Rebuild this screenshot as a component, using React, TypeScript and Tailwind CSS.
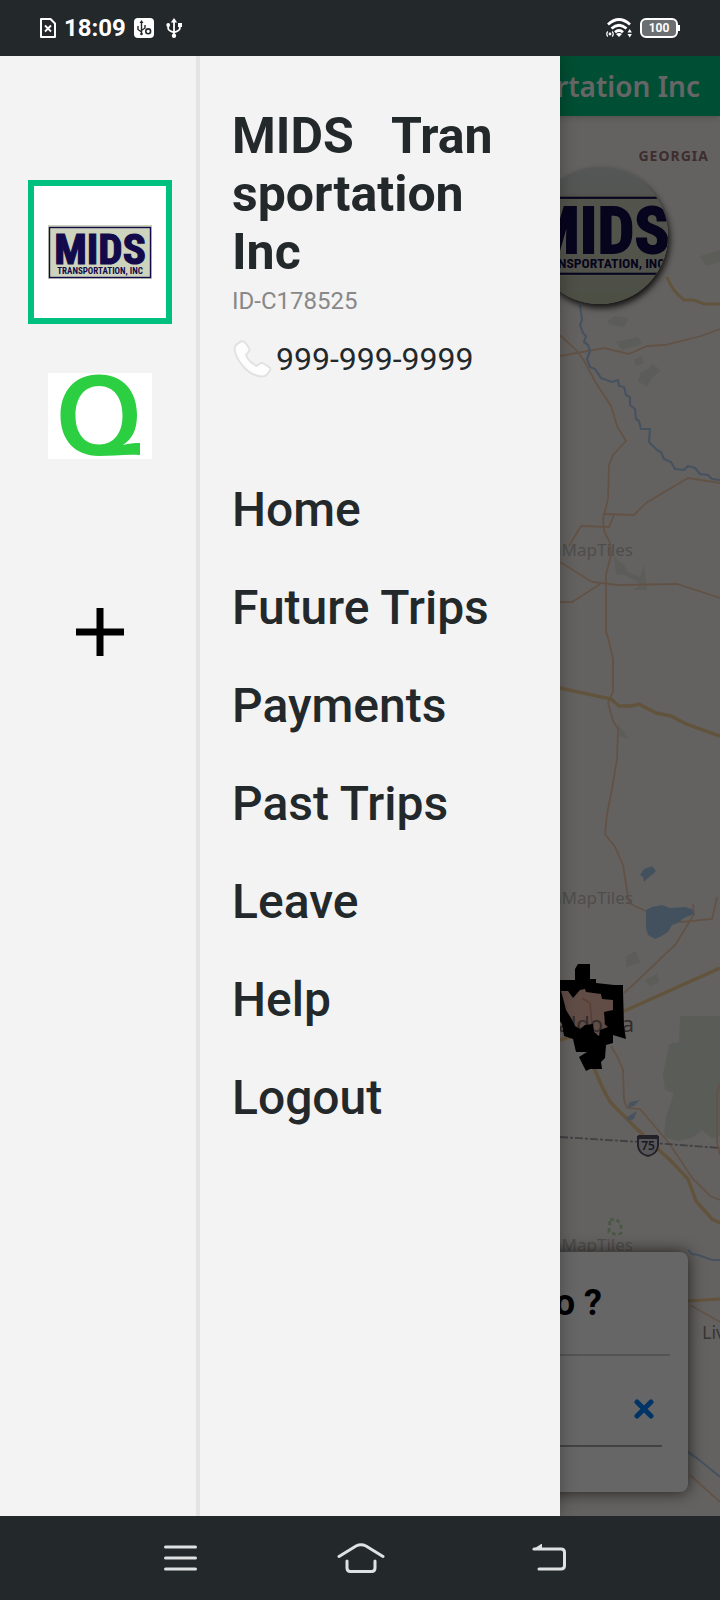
import React from "react";

const menuItems = ["Home", "Future Trips", "Payments", "Past Trips", "Leave", "Help", "Logout"];

function MidsLogo({ className }: { className?: string }) {
  return (
    <svg viewBox="0 0 104 54" className={className} role="img" aria-label="MIDS Transportation, Inc">
      <rect width="104" height="54" fill="#cdd3bd" />
      <rect x="1.5" y="2.5" width="101" height="50" fill="none" stroke="#120a4a" strokeWidth="1.4" />
      <text x="52" y="38.5" textAnchor="middle" fontSize="43" fontWeight="700" fill="#120a4a" stroke="#120a4a" strokeWidth="1.2" className="font-['Liberation_Sans_Narrow','Roboto_Condensed',sans-serif]">MIDS</text>
      <text x="52" y="49" textAnchor="middle" fontSize="9" fontWeight="700" fill="#120a4a" className="font-['Liberation_Sans_Narrow','Roboto_Condensed',sans-serif]">TRANSPORTATION, INC</text>
    </svg>
  );
}

function QLogo() {
  return (
    <svg viewBox="0 0 104 86" className="h-[86px] w-[104px]" role="img" aria-label="Q">
      <rect width="104" height="86" fill="#fff" />
      <path fillRule="evenodd" fill="#2ccf41" d="M51 1.5C75 1.500 89 18 89 42C89 57 84 66 75 72C81 70.500 86 70 92 70V82C78 81 64 83 51 83C27 83 12.500 67 12.500 42.500C12.500 18 27 1.500 51 1.500ZM51 13C36 13 27.500 25 27.500 42.500C27.500 60 36 71.500 51 71.500C66 71.500 74.500 60 74.500 42.500C74.500 25 66 13 51 13Z" />
    </svg>
  );
}

function StatusBar() {
  return (
    <header className="flex h-14 items-center justify-between bg-[#23282b] pr-10 pl-10 text-white">
      <div className="flex items-center">
        <svg width="16" height="20" viewBox="0 0 16 20" fill="none" stroke="#fff" aria-hidden="true">
          <path d="M1 1h9.500l4.500 4.500V19H1Z" strokeWidth="2" strokeLinejoin="round" />
          <path d="m5 7.500 6 6m0-6-6 6" strokeWidth="1.800" />
        </svg>
        <span className="ml-2 text-2xl font-bold">18:09</span>
        <svg width="20" height="20" viewBox="0 0 20 20" fill="none" className="ml-2" aria-hidden="true">
          <rect width="20" height="20" rx="4" fill="#fff" />
          <path d="M7.500 16V4M4 8v3.500l3.500 2.500M11 7v3L7.500 12.500" stroke="#23282b" strokeWidth="1.400" />
          <path d="m5.500 5 2-3 2 3Z" fill="#23282b" />
          <circle cx="7.500" cy="16" r="1.300" fill="#23282b" />
          <circle cx="14.200" cy="13.300" r="2.400" stroke="#23282b" strokeWidth="1.600" />
        </svg>
        <svg width="16" height="20" viewBox="0 0 16 20" fill="none" className="ml-3" aria-hidden="true">
          <path d="M8 17V3M2.200 7v3.500Q2.200 12.500 8 14.500M13.800 7v3.500Q13.800 12.500 8 14.500" stroke="#fff" strokeWidth="1.800" />
          <path d="M4.800 4.500 8 0l3.200 4.500Z" fill="#fff" />
          <circle cx="8" cy="17.800" r="2.200" fill="#fff" />
          <circle cx="2.200" cy="7" r="1.900" fill="#fff" />
          <path d="M12 5h4v4h-4Z" fill="#fff" />
        </svg>
      </div>
      <div className="flex items-center gap-2">
        <svg width="26" height="20" viewBox="0 0 26 20" fill="none" aria-hidden="true">
          <path d="M2 6.500Q13-3.500 24 6.500M5.500 10.500Q13 4 20.500 10.500M9 14.200Q13 10.800 17 14.200" stroke="#fff" strokeWidth="2.800" />
          <path d="m10 16 3 3 3-3q-3-2-6 0Z" fill="#fff" />
          <circle cx="4" cy="16" r="1.400" fill="#fff" />
          <path d="M1.800 13.500Q-.3 16 1.800 18.500M6.200 13.500Q8.300 16 6.200 18.500" stroke="#fff" strokeWidth="1.200" />
          <path d="m21.500 14.500 2.200-3.500 2.200 3.500ZM21.500 16l2.200 3.500 2.200-3.500Z" fill="#fff" />
        </svg>
        <div className="flex items-center">
          <div className="flex h-5 w-[38px] items-center justify-center rounded-md border-2 border-white bg-[#6b6f71] text-xs font-bold">100</div>
          <div className="h-1.5 w-0.5 bg-white" />
        </div>
      </div>
    </header>
  );
}

function MapDrawing() {
  return (
    <svg viewBox="0 116 720 1400" preserveAspectRatio="xMaxYMin slice" className="absolute inset-0 h-full w-full bg-[#f9f4ef]" aria-hidden="true">
      <g fill="#e6e6dc">
        <path d="M604 250l12 8 4 10-8-3-6-8ZM622 240l15-7 12 4 15 3-5 16-14 4-8-9-6 7-7-4ZM700 256l20-6v12l-14 4ZM607 321l8-5 14 2-5 9-14-2ZM616 342l22-5 4 7-20 6ZM634 360l8-4 2 7-8 3Z" />
        <path d="M652 364l9 6-9 8-5 9-9-6 3-9 7-3ZM614 557l10 8 4 7 12 5 4-12 3 25h-14l8-6-18-10-7 1ZM617 724l6 6 5 9-9-3ZM626 956l10-5 4 12-14 4ZM645 980l12-6 2 8-9 4Z" />
      </g>
      <path d="M680 1016h40v120l-8 2-10-8-10 8-14 3-14-4 2-20 8-24-9-3-2-16 6-30 10-2Z" fill="#e2e5da" />
      <g fill="none" stroke="#f5cdb0" strokeWidth="1.800">
        <path d="M560 246q10-3 6-12M561 240l13 10 8 12 10 21M560 282l20-18" />
        <path d="M560 335l16 15 7 9 13 24 15 23 6 20 9 15-13 14-4 10-1 34-5 20 1 12 6 12 1 12-5 20v56l4 14 3 14v32l-5 12 5 18 5 8-1 30-5 30-5 25-2 20 10 13 8 18 6 38 8 4 25 11 20 4 30-3 5-22" />
        <path d="M560 356l44-8 25 6 18-8 18-1 36-9 19-7M603 514l31 1 12-12 42-25 32 5M569 546l12-20 28 1 5-12M560 562l32 20 26 3 59-1 43 14M560 602h12l19-12 9-6M693 904l1 10-18 30-42 40-10 9" />
        <path d="M611 1046l7 12 5 12 1 30 3 8 13 1 29 34 24 36 17 17 10 4M720 1083l-3 10v50l3 12M690 1305l30 17M690 1475l30 27" />
      </g>
      <g fill="none" stroke="#f5cf98" strokeWidth="3.500">
        <path d="M560 688l51 11 8 7h12l8-2 17 9 15 3 15 8 34 12M622 1012l98-44M560 1040l15-5" />
        <path d="M593 1065q10 26 18 38l16 16 24 24 19 17 18 19 8 22 16 18 8 4" />
        <path d="M667 277q5 14 17 23h10l10 4h16M688 1301l32-2" strokeWidth="3" />
      </g>
      <g fill="none" stroke="#b0cdf0" strokeWidth="2.200" strokeLinejoin="round">
        <path d="M580 305l2 15-2 5 3 8 3 3-2 6 4 3 2 6-3 8 3 8 5 2 6 9 11 4 6-2 1 6 5 1 2 8 4 2 0 8 5 4 1 10 3 2 2 8 9 0-1 13 8 8 4 2 3 7 7 3 4 7 9 1 4-4 7 2 5 6 8 1 4 4 8 1 9 9" />
        <path d="M688 1250l4 4 6 1 14 5h8M688 1452l10 7 10 8 12 10" />
      </g>
      <path fill="#a9cbee" d="M644 869l8-3 4 5-3 3-5 4-4 4-1-5-3-2ZM646 910l6-3 10-2 8 3 15-1 7 2 2 5-10 4-6 5-6 2-4 7-8 5-5 2-7-4-2-7Z" />
      <path fill="#b5cfe8" d="M630 1102l10-2-6 6-7 2ZM627 1117l10-6-3 8-6 2Z" />
      <path d="M610 1220l6-1 5 5v9l-4 2-8-3Z" fill="none" stroke="#bcdcb0" strokeWidth="3" strokeDasharray="4 3" />
      <path d="M560 1137l80 5 80 6" fill="none" stroke="#a59da5" strokeWidth="1.800" strokeDasharray="8 2 3 2" />
      <g fill="#c4c1be" fontSize="17" textAnchor="end" className="font-['Noto_Sans',sans-serif]">
        <text x="633" y="556">OpenMapTiles</text>
        <text x="633" y="904">OpenMapTiles</text>
        <text x="633" y="1251">OpenMapTiles</text>
      </g>
      <text x="709" y="161" fontSize="14" fontWeight="700" textAnchor="end" letterSpacing="1" fill="#9b7074" className="font-['Noto_Sans',sans-serif]">GEORGIA</text>
      <text x="702" y="1339" fontSize="18" fill="#8c8784" className="font-['Noto_Sans',sans-serif]">Live Oak</text>
      <path d="M560 988h56v46h-22l-14 2-20-20Z" fill="#f3bfae" />
      <path d="M582 998l8 5 2 20" fill="none" stroke="#e09c84" strokeWidth="1.500" />
      <text x="634" y="1032" fontSize="22" textAnchor="end" fill="#7b706e" className="font-['Noto_Sans',sans-serif]">Valdosta</text>
      <path fillRule="evenodd" fill="#000" d="M558 980H575V969L578 964H590V979H596V983L614 985H623V990L624 1027L626 1039L613 1035V1043L606 1045L605 1058L601 1062L602 1069H590L586 1071L579 1057L587 1052H576L573 1039L564 1036L562 1024L558 1018ZM561 991H568L573 998L580 990L585 989L586 992L601 994L602 999L613 1000V1010L604 1012L605 1024L608 1027L600 1030L599 1036L594 1032L593 1024L585 1025L580 1029L575 1026L571 1018L566 1010L564 1002Z" />
      <path d="M638 1137h20v9q-1 8-10 10-9-2-10-10Z" fill="#dad7e0" stroke="#595564" strokeWidth="2" />
      <path d="M638 1135h20v4h-20Z" fill="#595564" />
      <text x="648" y="1150" fontSize="12" fontWeight="600" textAnchor="middle" fill="#434050" className="font-['Noto_Sans',sans-serif]">75</text>
    </svg>
  );
}

function MapScreen() {
  return (
    <main className="flex min-w-0 flex-col overflow-hidden [grid-area:1/1]">
      <div className="relative z-10 flex h-[60px] shrink-0 items-center justify-end bg-[#00c381] pr-5 font-['Noto_Sans',sans-serif] text-[28px] font-semibold whitespace-nowrap text-white shadow-md">
        MIDS Transportation Inc
      </div>
      <div className="relative flex flex-1">
        <MapDrawing />
        <div className="relative flex flex-1 flex-col justify-between px-8 pt-[51px] pb-6">
          <button aria-label="MIDS Transportation" className="mr-5 flex size-[137px] items-center justify-center self-end overflow-hidden rounded-full bg-linear-to-b from-[#d5d9da] to-[#bfc5a9] shadow-[2px_4px_6px_rgba(0,0,0,0.8)]">
            <MidsLogo className="w-[158px] shrink-0" />
          </button>
          <section className="flex flex-col rounded-lg bg-white px-[18px] pb-[45px] shadow-[0_0_16px_rgba(0,0,0,0.7)]">
            <h2 className="flex h-[104px] items-center justify-end border-b-2 border-[#cfcfcf] pr-[68px] text-4xl font-bold whitespace-nowrap text-black">Where do you want to go ?</h2>
            <div className="mr-2 flex h-[91px] items-center justify-end border-b-2 border-[#a5a5a5] pt-4 pr-2">
              <button aria-label="Clear destination">
                <svg width="20" height="20" viewBox="0 0 20 20" aria-hidden="true">
                  <path d="M3 3l14 14M17 3 3 17" stroke="#0080ff" strokeWidth="5" strokeLinecap="round" />
                </svg>
              </button>
            </div>
          </section>
        </div>
      </div>
    </main>
  );
}

function Drawer() {
  return (
    <div className="z-20 flex min-w-0 bg-black/60 [grid-area:1/1]">
      <aside className="flex w-7/9 bg-[#f3f3f3] text-[#23282b] shadow-[0_0_16px_rgba(0,0,0,0.3)]">
        <div className="flex w-[196px] shrink-0 flex-col items-center pt-[124px] pl-1">
          <button className="flex size-36 items-center justify-center border-6 border-[#00c080] bg-white">
            <MidsLogo className="w-[104px] shrink-0" />
          </button>
          <button className="mt-[49px]"><QLogo /></button>
          <button className="mt-[149px]" aria-label="Add company">
            <svg width="48" height="48" viewBox="0 0 48 48" aria-hidden="true">
              <path d="M24 0v48M0 24h48" stroke="#000" strokeWidth="7" />
            </svg>
          </button>
        </div>
        <div className="w-1 shrink-0 bg-[#e4e4e4]" />
        <div className="min-w-0 flex-1 pt-[51px] pr-12 pl-8">
          <h1 className="text-[50px] leading-[58px] font-bold break-words">{"MIDS\u00a0\u00a0\u00a0Transportation Inc"}</h1>
          <p className="mt-1.5 text-2xl leading-7 text-[#888]">ID-C178525</p>
          <a href="tel:999-999-9999" className="mt-6 flex h-10 items-center gap-1 text-[32px] leading-10">
            <svg width="40" height="40" viewBox="0 0 40 40" aria-hidden="true">
              <path d="M9 2.500Q11.500 1.500 13.500 4L17 9Q18.500 11.500 15.500 14L14 16Q16.500 22.500 24.500 27L28 24.500Q29.500 23.500 31.500 24.500L37 28Q39.500 29.500 37.500 32Q34.500 38 29.500 37.500Q19 37 10 26Q3 17 2.500 9.500Q3 5.500 9 2.500Z" fill="#fdfdfd" stroke="#e2e2e2" strokeWidth="2" strokeLinejoin="round" />
            </svg>
            999-999-9999
          </a>
          <nav className="mt-[82px]">
            <ul>
              {menuItems.map((item) => (
                <li key={item}>
                  <a href="#" className="flex h-[98px] items-center text-5xl font-medium whitespace-nowrap">{item}</a>
                </li>
              ))}
            </ul>
          </nav>
        </div>
      </aside>
    </div>
  );
}

function SystemNav() {
  return (
    <footer className="flex h-[84px] items-center justify-between bg-[#23282b] pr-[148px] pl-[162px]">
      <button aria-label="Recent apps">
        <svg width="36" height="28" viewBox="0 0 36 28" stroke="#dfe2e2" strokeWidth="3" strokeLinecap="round" aria-hidden="true">
          <path d="M3.500 3h30M3.500 14h30M3.500 25h30" />
        </svg>
      </button>
      <button aria-label="Home screen">
        <svg width="48" height="30" viewBox="0 0 48 30" fill="none" stroke="#dfe2e2" strokeWidth="3" strokeLinecap="round" aria-hidden="true">
          <path d="M2 13.500 19 3q5-2.500 10 0l17 10.500M10 18v7q0 3.500 3.500 3.500h21q3.500 0 3.500-3.500v-7" />
        </svg>
      </button>
      <button aria-label="Back">
        <svg width="48" height="28" viewBox="0 0 48 28" fill="none" aria-hidden="true">
          <path d="M10 5h27q3.500 0 3.500 3.500v13q0 3.500-3.500 3.500H15" stroke="#dfe2e2" strokeWidth="3" strokeLinecap="round" />
          <path d="M8 6 18-.5V6Z" fill="#dfe2e2" />
        </svg>
      </button>
    </footer>
  );
}

export default function App() {
  return (
    <div className="flex min-h-screen flex-col overflow-x-hidden bg-[#23282b] font-[Roboto,sans-serif]">
      <StatusBar />
      <div className="grid flex-1 grid-cols-[minmax(0,1fr)] overflow-hidden">
        <MapScreen />
        <Drawer />
      </div>
      <SystemNav />
    </div>
  );
}
